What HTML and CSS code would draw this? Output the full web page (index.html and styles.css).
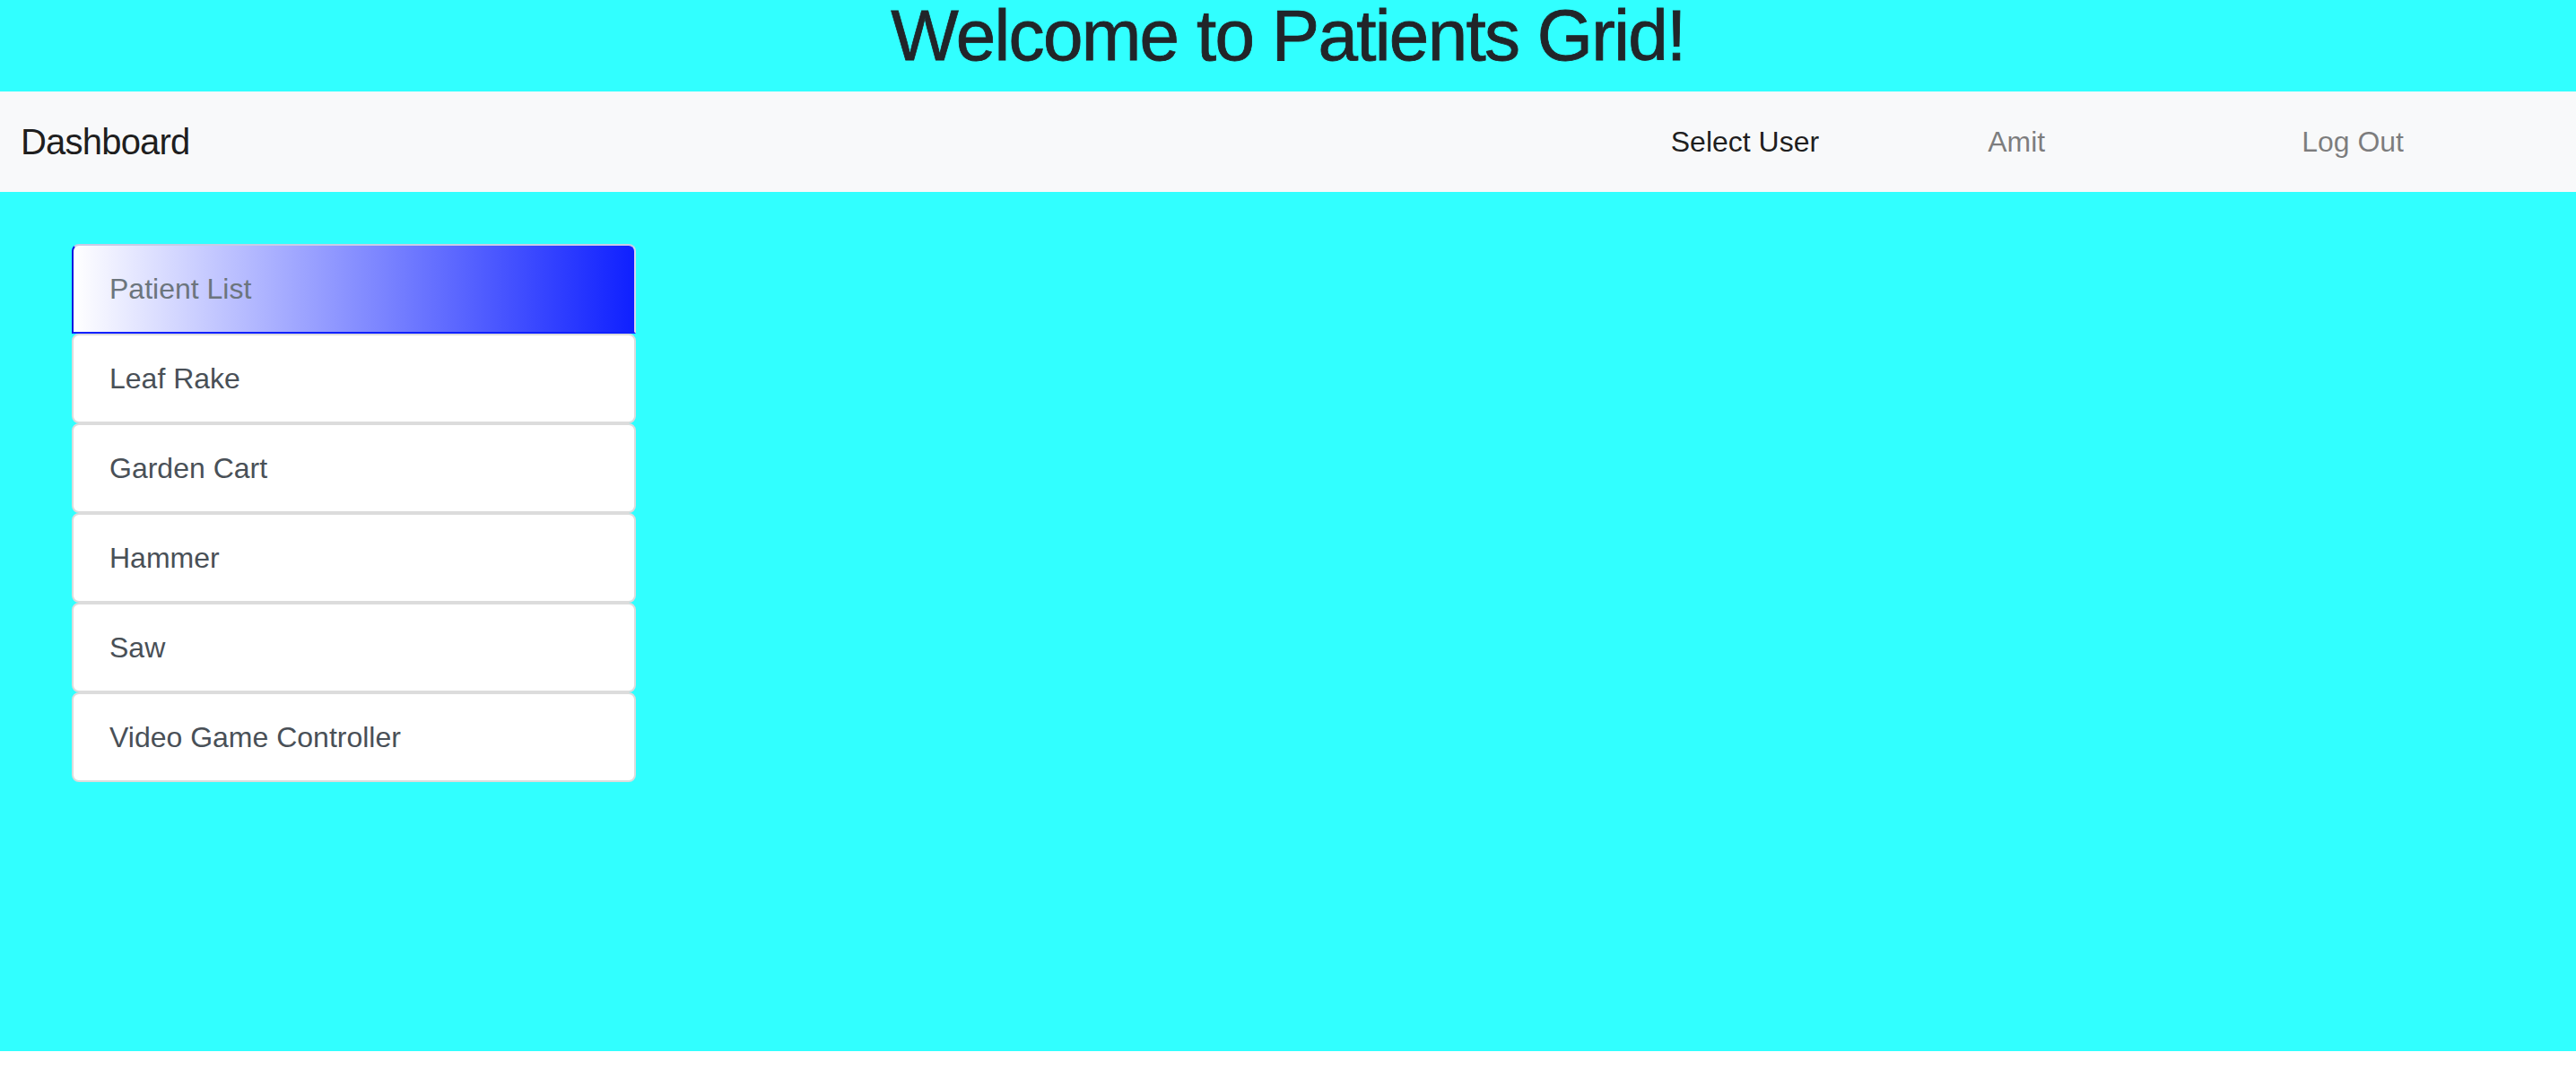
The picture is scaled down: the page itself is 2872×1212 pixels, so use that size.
FILE: index.html
```html
<!DOCTYPE html>
<html lang="en">
<head>
<meta charset="utf-8">
<title>Patients Grid</title>
<link rel="stylesheet" href="styles.css">
</head>
<body>
<div class="app">
  <h1 class="title">Welcome to Patients Grid!</h1>
  <nav class="navbar">
    <a class="brand" href="#">Dashboard</a>
    <ul class="nav">
      <li class="nav-item nav-select"><span class="nav-link active">Select User</span></li>
      <li class="nav-item nav-user"><a class="nav-link" href="#">Amit</a></li>
      <li class="nav-item nav-logout"><a class="nav-link" href="#">Log Out</a></li>
    </ul>
  </nav>
  <main class="content">
    <div class="list-group">
      <div class="list-item list-head">Patient List</div>
      <a class="list-item" href="#">Leaf Rake</a>
      <a class="list-item" href="#">Garden Cart</a>
      <a class="list-item" href="#">Hammer</a>
      <a class="list-item" href="#">Saw</a>
      <a class="list-item" href="#">Video Game Controller</a>
    </div>
  </main>
</div>
</body>
</html>
```

FILE: styles.css
```css
html, body {
  margin: 0;
  padding: 0;
  background: #ffffff;
  font-family: "Liberation Sans", Arial, sans-serif;
}

.app {
  height: 1172px;
  background: #31ffff;
  display: flex;
  flex-direction: column;
}

.title {
  margin: 0;
  height: 102px;
  box-sizing: border-box;
  padding-bottom: 22px;
  font-size: 80px;
  line-height: 80px;
  font-weight: 400;
  letter-spacing: -1.7px;
  text-align: center;
  color: #212529;
  -webkit-text-stroke: 0.8px #212529;
}

.navbar {
  height: 112px;
  flex: none;
  background: #f8f9fa;
  display: flex;
  align-items: center;
  padding: 0 176px 0 23px;
}

.brand {
  font-size: 40px;
  line-height: 60px;
  letter-spacing: -0.8px;
  color: rgba(0, 0, 0, 0.9);
  text-decoration: none;
}

.nav {
  list-style: none;
  margin: 0 0 0 auto;
  padding: 0;
  display: flex;
  align-items: center;
}

.nav-link {
  display: block;
  padding: 16px;
  font-size: 32px;
  line-height: 48px;
  color: rgba(0, 0, 0, 0.5);
  text-decoration: none;
}

.nav-link.active {
  color: rgba(0, 0, 0, 0.9);
}

.nav-user {
  margin-left: 156px;
}

.nav-logout {
  margin-left: 254px;
}

.content {
  flex: 1;
  padding: 58px 0 0 80px;
}

.list-group {
  width: 629px;
  display: flex;
  flex-direction: column;
}

.list-item {
  display: block;
  box-sizing: border-box;
  height: 100px;
  padding: 24px 40px;
  font-size: 32px;
  line-height: 48px;
  color: #495057;
  text-decoration: none;
  background: #ffffff;
  border: 2px solid #dcdcdc;
  border-radius: 8px;
}

.list-head {
  color: #6c757d;
  background: linear-gradient(to right, #ffffff 0%, #0f20ff 100%);
  border-color: #c9cbe6 #d6d6ef #0f20ff #0a14e0;
  border-bottom-left-radius: 0;
  border-bottom-right-radius: 0;
}
```
